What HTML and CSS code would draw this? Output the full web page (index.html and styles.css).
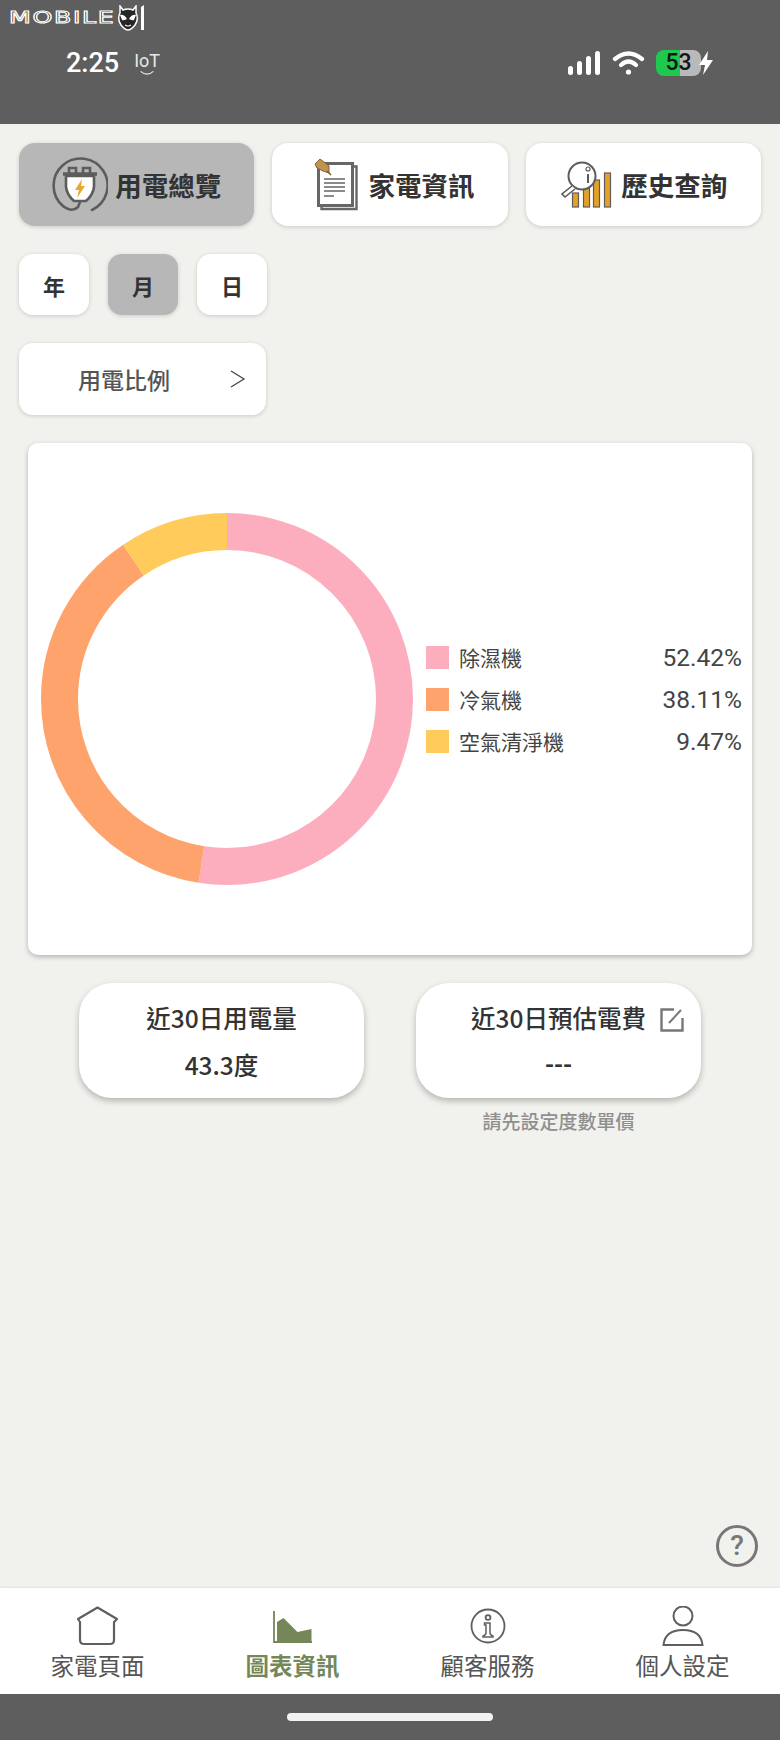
FILE: index.html
```html
<!DOCTYPE html>
<html lang="zh-Hant">
<head>
    <meta charset="UTF-8">
    <meta name="viewport" content="width=device-width, initial-scale=1.0">
    <title>用電總覽</title>
    <link rel="stylesheet" href="styles.css">
</head>
<body>
<div class="page">

    <header class="status-bar">
        <div class="watermark">
            <span class="watermark-text">MOBILE</span>
            <svg class="watermark-face" viewBox="0 0 30 26" width="30" height="26">
                <path d="M5 1 L8 5 Q13 3 18 5 L21 1 L21 8 Q24 14 20 20 Q16 25 13 25 Q10 25 6 20 Q2 14 5 8 Z" fill="#262626" stroke="#fff" stroke-width="1.5"/>
                <path d="M5 10 Q9 9 12 14 Q8 16 7 15 Z M21 10 Q17 9 14 14 Q18 16 19 15 Z" fill="#fff"/>
                <path d="M10 20 Q13 22 16 20" fill="none" stroke="#fff" stroke-width="1.2"/>
                <path d="M26 2 L29 0 L29 25 L26 25 Z" fill="#fff"/>
            </svg>
        </div>
        <div class="status-left">
            <span class="clock">2:25</span>
            <span class="iot">
                <span class="iot-text">IoT</span>
                <svg viewBox="0 0 20 6" width="16" height="6"><path d="M2 1 Q10 8 18 1" fill="none" stroke="#e8e8e8" stroke-width="1.4"/></svg>
            </span>
        </div>
        <div class="status-right">
            <svg viewBox="0 0 33 24" width="33" height="24" fill="#fff">
                <rect x="0" y="15" width="5" height="9" rx="2.5"/>
                <rect x="9" y="10" width="5" height="14" rx="2.5"/>
                <rect x="18" y="5" width="5" height="19" rx="2.5"/>
                <rect x="27" y="0" width="5" height="24" rx="2.5"/>
            </svg>
            <svg viewBox="0 0 33 24" width="33" height="24" fill="none" stroke="#fff" stroke-width="4.2" stroke-linecap="round">
                <path d="M3 8 Q16.5 -3 30 8"/>
                <path d="M9 14 Q16.5 7 24 14"/>
                <circle cx="16.5" cy="21" r="2.6" fill="#fff" stroke="none"/>
            </svg>
            <div class="battery">53</div>
            <svg class="bolt" viewBox="0 0 16 24" width="16" height="24"><path d="M10 0 L1 14 L7 14 L5 24 L15 9 L9 9 Z" fill="#fff"/></svg>
        </div>
    </header>

    <main class="content">
        <nav class="tabs">
            <button class="tab active">
                <svg viewBox="0 0 56 56" width="56" height="56">
                    <path d="M40 53 A27 27 0 1 0 11 49" fill="none" stroke="#5c5c5c" stroke-width="2.6" stroke-linecap="round"/>
                    <path d="M11 49 Q20 56 26 50 L28 45" fill="none" stroke="#5c5c5c" stroke-width="2.6"/>
                    <path d="M17 16 V11 H24 V16 M31 16 V11 H38 V16" fill="none" stroke="#5c5c5c" stroke-width="2.6"/>
                    <path d="M11 17 H45" stroke="#5c5c5c" stroke-width="3.6"/>
                    <path d="M14 19 H42 V30 Q41 38 34 44 H22 Q15 38 14 30 Z" fill="#fff" stroke="#5c5c5c" stroke-width="2.6" stroke-linejoin="round"/>
                    <path d="M30 22 L23 33 H27 L25 41 L33 29 H29 Z" fill="#e9a72c"/>
                </svg>
                <span>用電總覽</span>
            </button>
            <button class="tab docs">
                <svg viewBox="0 0 44 52" width="44" height="52">
                    <rect x="4.5" y="4.5" width="34" height="42" fill="#fff" stroke="#666" stroke-width="3"/>
                    <path d="M38.5 7.5 H42.5 V50 H7.5 V46.5" fill="none" stroke="#666" stroke-width="2.4"/>
                    <path d="M10 20 H31 M10 24 H31 M10 28 H31 M10 32 H31 M10 37 H20" stroke="#666" stroke-width="1.6"/>
                    <path d="M1 5 L6 0 L10 3 L15 7 L15 14 L9 12 L3 9 Z" fill="#c09450" stroke="#7c6236" stroke-width="1"/>
                    <path d="M13 12 L17 16" stroke="#7c6236" stroke-width="1.6"/>
                </svg>
                <span>家電資訊</span>
            </button>
            <button class="tab history">
                <svg viewBox="0 0 52 48" width="52" height="48">
                    <g fill="#e5a126" stroke="#5c5c5c" stroke-width="1.2">
                        <rect x="11.5" y="32" width="6" height="14"/>
                        <rect x="22.5" y="27" width="6" height="19"/>
                        <rect x="32.5" y="19" width="6" height="27"/>
                        <rect x="43.5" y="12" width="6" height="34"/>
                    </g>
                    <circle cx="21" cy="15" r="13.5" fill="#fff" fill-opacity="0.85" stroke="#5c5c5c" stroke-width="2"/>
                    <path d="M11 25 L1 33 L4 36 L14 28" fill="#fff" stroke="#5c5c5c" stroke-width="1.6"/>
                    <circle cx="27" cy="8" r="2" fill="none" stroke="#5c5c5c" stroke-width="1.2"/>
                    <path d="M27 13 L27 22" stroke="#5c5c5c" stroke-width="2"/>
                </svg>
                <span>歷史查詢</span>
            </button>
        </nav>

        <div class="segments">
            <button class="segment">年</button>
            <button class="segment active">月</button>
            <button class="segment">日</button>
        </div>

        <button class="dropdown">
            <span class="dropdown-label">用電比例</span>
            <svg viewBox="0 0 16 20" width="16" height="20"><path d="M1 2 L14 10 L1 18" fill="none" stroke="#444" stroke-width="1.3"/></svg>
        </button>

        <section class="chart-card">
            <svg class="donut" viewBox="0 0 372 372" width="372" height="372">
                <g fill="none" stroke-width="37" transform="rotate(-90 186 186)">
                    <circle cx="186" cy="186" r="167.5" stroke="#fdaebe" stroke-dasharray="551.7 1052.4"/>
                    <circle cx="186" cy="186" r="167.5" stroke="#ffa36d" stroke-dasharray="401.1 1052.4" stroke-dashoffset="-551.7"/>
                    <circle cx="186" cy="186" r="167.5" stroke="#ffcc5c" stroke-dasharray="99.7 1052.4" stroke-dashoffset="-952.8"/>
                </g>
            </svg>
            <ul class="legend">
                <li><i class="swatch pink"></i><span class="legend-name">除濕機</span><span class="legend-value">52.42%</span></li>
                <li><i class="swatch orange"></i><span class="legend-name">冷氣機</span><span class="legend-value">38.11%</span></li>
                <li><i class="swatch yellow"></i><span class="legend-name">空氣清淨機</span><span class="legend-value">9.47%</span></li>
            </ul>
        </section>

        <section class="stats">
            <div class="stat">
                <div class="stat-card">
                    <div class="stat-title">近30日用電量</div>
                    <div class="stat-value">43.3度</div>
                </div>
            </div>
            <div class="stat">
                <div class="stat-card">
                    <div class="stat-title">近30日預估電費</div>
                    <svg class="edit-icon" viewBox="0 0 24 24" width="24" height="24" fill="none" stroke="#777" stroke-width="2.4">
                        <path d="M14 1.5 H1.5 V22.5 H22.5 V10"/>
                        <path d="M9 15 L21 2" stroke-width="2"/>
                    </svg>
                    <div class="stat-value dashes">---</div>
                </div>
                <p class="stat-note">請先設定度數單價</p>
            </div>
        </section>

        <button class="help">?</button>
    </main>

    <nav class="bottom-nav">
        <a class="nav-item">
            <svg viewBox="0 0 42 40" width="42" height="40" fill="none" stroke="#5f5f5f" stroke-width="2.2" stroke-linejoin="round">
                <path d="M20.5 1.5 L40 13 L37 16 V34 Q37 38 33 38 H7 Q3 38 3 34 V16 L1 13 Z"/>
            </svg>
            <span>家電頁面</span>
        </a>
        <a class="nav-item active">
            <svg viewBox="0 0 42 40" width="42" height="40">
                <path d="M2 5 V36 H40" fill="none" stroke="#758758" stroke-width="1.8"/>
                <path d="M5 16 L11.5 12 L25.5 26 L39.5 23 V35 H5 Z" fill="#758758"/>
            </svg>
            <span>圖表資訊</span>
        </a>
        <a class="nav-item">
            <svg viewBox="0 0 42 40" width="42" height="40" fill="none" stroke="#5f5f5f" stroke-width="1.8">
                <circle cx="21" cy="20" r="16.5"/>
                <circle cx="21" cy="11.5" r="2.4"/>
                <path d="M17.5 17 H23 V27 Q23 29 26 30 V31 H16 V30 Q19 29 19 27 V19 H17.5 Z" stroke-width="1.5"/>
            </svg>
            <span>顧客服務</span>
        </a>
        <a class="nav-item">
            <svg viewBox="0 0 42 40" width="42" height="40" fill="none" stroke="#5f5f5f" stroke-width="2">
                <circle cx="21" cy="10" r="9.5"/>
                <path d="M1.5 39 Q3 24 21 24 Q39 24 40.5 39 Z"/>
            </svg>
            <span>個人設定</span>
        </a>
    </nav>

    <footer class="home-bar"><div class="home-indicator"></div></footer>

</div>
</body>
</html>
```

FILE: styles.css
```css
* {
    box-sizing: border-box;
}

body {
    margin: 0;
    background-color: #f1f2ee;
    font-family: "Noto Sans CJK TC", "Noto Sans", sans-serif;
    color: #333;
}

button {
    font-family: inherit;
    border: none;
    cursor: pointer;
}

.page {
    display: flex;
    flex-direction: column;
    height: 1740px;
    overflow: hidden;
}

/* status bar */

.status-bar {
    position: relative;
    flex: none;
    display: flex;
    justify-content: space-between;
    align-items: flex-start;
    height: 124px;
    padding: 50px 66px 0 66px;
    background-color: #5e5e5e;
}

.watermark {
    position: absolute;
    top: 5px;
    left: 9px;
    display: flex;
    align-items: center;
    width: 136px;
    height: 26px;
}

.watermark-text {
    display: inline-block;
    flex: none;
    width: 106px;
    font-family: "DejaVu Sans", sans-serif;
    font-size: 15px;
    letter-spacing: 1px;
    line-height: 26px;
    color: #2a2a2a;
    -webkit-text-stroke: 0.9px #fff;
    transform: scaleX(1.68);
    transform-origin: left center;
}

.watermark-face {
    display: block;
    flex: none;
}

.status-left {
    display: flex;
    gap: 15px;
    align-items: center;
    height: 26px;
}

.clock {
    font-family: "Roboto", sans-serif;
    font-size: 27px;
    font-weight: 500;
    color: #fff;
    line-height: 26px;
}

.iot {
    display: flex;
    flex-direction: column;
    align-items: center;
    width: 26px;
    padding-top: 2px;
}

.iot-text {
    font-family: "Roboto", sans-serif;
    font-size: 18px;
    line-height: 18px;
    color: #e8e8e8;
}

.iot svg {
    display: block;
}

.status-right {
    display: flex;
    align-items: center;
    gap: 11px;
    height: 26px;
}

.battery {
    width: 45px;
    height: 26px;
    margin-right: -14px;
    border-radius: 8px;
    background: linear-gradient(90deg, #1fc94f 53%, #b9b9b9 53%);
    font-family: "Roboto", sans-serif;
    font-size: 23px;
    font-weight: 500;
    line-height: 26px;
    text-align: center;
    color: #151515;
}

/* main area */

.content {
    flex: 1;
    display: flex;
    flex-direction: column;
    align-items: flex-start;
    padding: 19px 19px 0;
}

.tabs {
    display: grid;
    grid-template-columns: repeat(3, 1fr);
    gap: 18px;
    width: 100%;
}

.tab {
    display: flex;
    align-items: center;
    justify-content: center;
    gap: 10px;
    height: 83px;
    padding: 0;
    border-radius: 16px;
    background-color: #fff;
    box-shadow: 0 1px 4px rgba(0, 0, 0, 0.16);
    font-size: 26.5px;
    font-weight: 700;
    color: #333;
}

.tab.active {
    gap: 7px;
    background-color: #b7b7b8;
}

.tab.docs {
    padding-left: 9px;
}

.tab.history {
    gap: 8px;
    padding-left: 2px;
}

.segments {
    display: flex;
    gap: 19px;
    margin-top: 28px;
}

.segment {
    width: 70px;
    height: 61px;
    padding: 0;
    border-radius: 14px;
    background-color: #fff;
    box-shadow: 0 1px 4px rgba(0, 0, 0, 0.16);
    font-size: 22px;
    font-weight: 700;
    color: #333;
}

.segment.active {
    background-color: #b7b7b8;
}

.dropdown {
    display: flex;
    align-items: center;
    width: 247px;
    height: 72px;
    margin-top: 28px;
    padding: 0 20px 0 59px;
    border-radius: 14px;
    background-color: #fff;
    box-shadow: 0 1px 4px rgba(0, 0, 0, 0.16);
}

.dropdown-label {
    flex: 1;
    text-align: left;
    font-size: 23px;
    font-weight: 500;
    color: #555;
}

.chart-card {
    display: flex;
    align-items: center;
    gap: 13px;
    width: 724px;
    height: 512px;
    margin: 28px 0 0 9px;
    padding: 0 10px 0 13px;
    border-radius: 10px;
    background-color: #fff;
    box-shadow: 0 2px 5px rgba(0, 0, 0, 0.25);
}

.donut {
    flex: none;
}

.legend {
    flex: 1;
    display: flex;
    flex-direction: column;
    gap: 19px;
    margin: 0;
    padding: 0;
    list-style: none;
}

.legend li {
    display: flex;
    align-items: center;
    height: 23px;
}

.swatch {
    width: 23px;
    height: 23px;
    margin-right: 10px;
}

.swatch.pink {
    background-color: #fdaebe;
}

.swatch.orange {
    background-color: #ffa36d;
}

.swatch.yellow {
    background-color: #ffcc5c;
}

.legend-name {
    flex: 1;
    font-size: 21px;
    color: #444;
}

.legend-value {
    font-family: "Roboto", sans-serif;
    font-size: 24.5px;
    color: #444;
}

.stats {
    display: flex;
    justify-content: center;
    align-items: flex-start;
    gap: 52px;
    width: 100%;
    margin-top: 28px;
}

.stat {
    width: 285px;
}

.stat-card {
    position: relative;
    display: flex;
    flex-direction: column;
    align-items: center;
    height: 115px;
    padding-top: 17px;
    border-radius: 33px;
    background-color: #fff;
    box-shadow: 0 3px 6px rgba(0, 0, 0, 0.25);
}

.stat-title {
    font-size: 24.5px;
    font-weight: 500;
    line-height: 36px;
    color: #333;
}

.edit-icon {
    position: absolute;
    top: 25px;
    right: 17px;
}

.stat-value {
    margin-top: 11px;
    font-size: 24.5px;
    font-weight: 500;
    line-height: 36px;
    color: #333;
}

.stat-value.dashes {
    margin-top: 9px;
    font-weight: 700;
}

.stat-note {
    margin: 9px 0 0;
    text-align: center;
    font-size: 19px;
    font-weight: 500;
    line-height: 28px;
    color: #8f8f8f;
}

.help {
    align-self: flex-end;
    width: 42px;
    height: 42px;
    margin-top: auto;
    margin-right: 3px;
    margin-bottom: 21px;
    padding: 0;
    border: 3px solid #777;
    border-radius: 50%;
    background: none;
    font-family: "Roboto", sans-serif;
    font-size: 28px;
    font-weight: 500;
    line-height: 34px;
    color: #777;
}

/* bottom navigation */

.bottom-nav {
    flex: none;
    display: grid;
    grid-template-columns: repeat(4, 1fr);
    height: 106px;
    background-color: #fff;
    box-shadow: 0 -1px 2px rgba(0, 0, 0, 0.06);
}

.nav-item {
    display: flex;
    flex-direction: column;
    align-items: center;
    padding-top: 18px;
    font-size: 23.5px;
    line-height: 38px;
    color: #555;
}

.nav-item svg {
    display: block;
}

.nav-item.active {
    font-weight: 700;
    color: #758758;
}

.home-bar {
    flex: none;
    display: flex;
    justify-content: center;
    height: 46px;
    padding-top: 19px;
    background-color: #5e5e5e;
}

.home-indicator {
    width: 206px;
    height: 8px;
    border-radius: 4px;
    background-color: #f2f2f2;
}
```
